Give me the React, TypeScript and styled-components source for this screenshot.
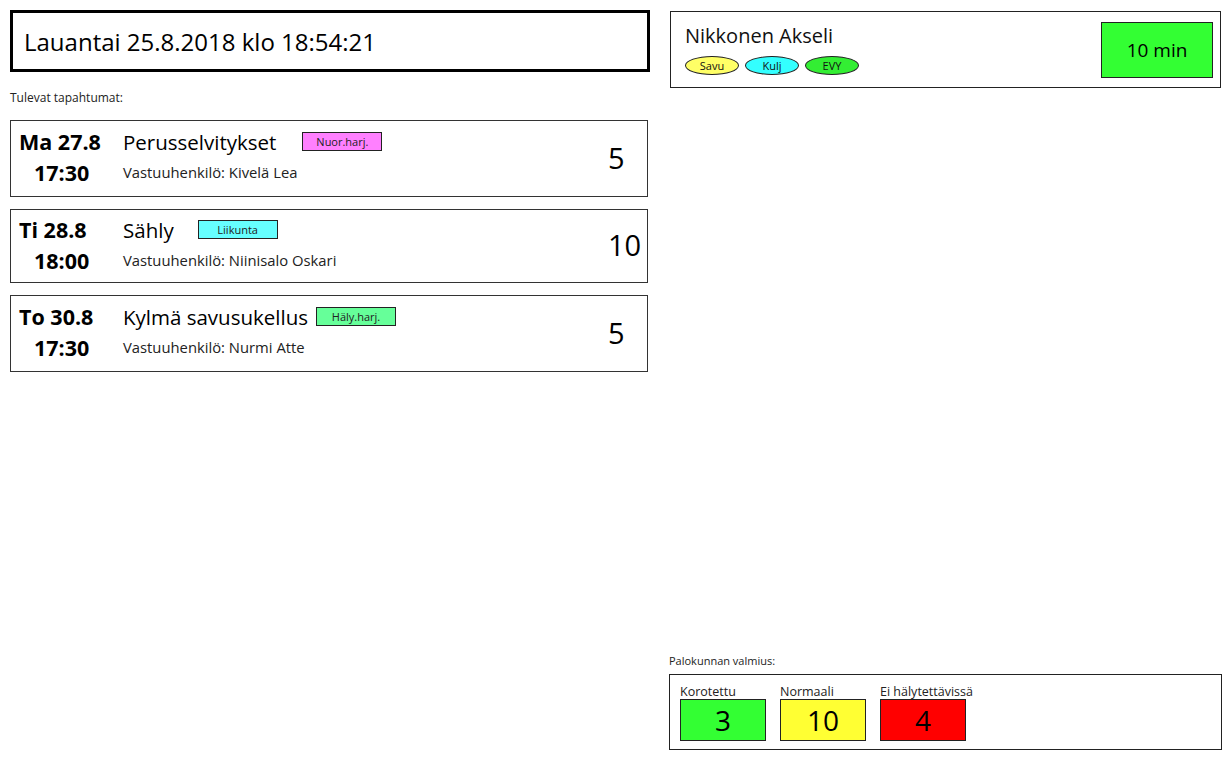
import React from "react";
import styled, { createGlobalStyle } from "styled-components";

const GlobalStyle = createGlobalStyle`
  html, body {
    margin: 0;
    padding: 0;
    background: #ffffff;
  }
  body {
    font-family: "Open Sans", "DejaVu Sans", sans-serif;
    color: #111111;
  }
  * {
    box-sizing: border-box;
  }
`;

type EventItem = {
  day: string;
  time: string;
  title: string;
  tag: string;
  tagColor: string;
  tagGap: number;
  person: string;
  count: string;
  height: number;
};

const events: EventItem[] = [
  {
    day: "Ma 27.8",
    time: "17:30",
    title: "Perusselvitykset",
    tag: "Nuor.harj.",
    tagColor: "#ff80ff",
    tagGap: 26,
    person: "Kivelä Lea",
    count: "5",
    height: 77,
  },
  {
    day: "Ti 28.8",
    time: "18:00",
    title: "Sähly",
    tag: "Liikunta",
    tagColor: "#66ffff",
    tagGap: 24,
    person: "Niinisalo Oskari",
    count: "10",
    height: 74,
  },
  {
    day: "To 30.8",
    time: "17:30",
    title: "Kylmä savusukellus",
    tag: "Häly.harj.",
    tagColor: "#66ff99",
    tagGap: 8,
    person: "Nurmi Atte",
    count: "5",
    height: 77,
  },
];

const skills = [
  { label: "Savu", color: "#ffff66" },
  { label: "Kulj", color: "#33ffff" },
  { label: "EVY", color: "#33ee33" },
];

const readiness = [
  { label: "Korotettu", value: "3", color: "#33ff33" },
  { label: "Normaali", value: "10", color: "#ffff33" },
  { label: "Ei hälytettävissä", value: "4", color: "#ff0000" },
];

const App = () => {
  return (
    <>
      <GlobalStyle />
      <Page>
        <LeftColumn>
          <Clock>Lauantai 25.8.2018 klo 18:54:21</Clock>
          <SectionLabel $top={19} $size={12}>
            Tulevat tapahtumat:
          </SectionLabel>
          <EventList>
            {events.map((ev) => (
              <EventCard key={ev.day} $height={ev.height}>
                <DateBlock>
                  <Day>{ev.day}</Day>
                  <Time>{ev.time}</Time>
                </DateBlock>
                <Info>
                  <TitleRow>
                    <Title>{ev.title}</Title>
                    <Tag $color={ev.tagColor} $gap={ev.tagGap}>
                      {ev.tag}
                    </Tag>
                  </TitleRow>
                  <Person>Vastuuhenkilö: {ev.person}</Person>
                </Info>
                <Count>{ev.count}</Count>
              </EventCard>
            ))}
          </EventList>
        </LeftColumn>

        <RightColumn>
          <PersonCard>
            <PersonInfo>
              <PersonName>Nikkonen Akseli</PersonName>
              <Pills>
                {skills.map((s) => (
                  <Pill key={s.label} $color={s.color}>
                    {s.label}
                  </Pill>
                ))}
              </Pills>
            </PersonInfo>
            <Eta>10 min</Eta>
          </PersonCard>

          <Readiness>
            <SectionLabel $top={0} $size={11}>
              Palokunnan valmius:
            </SectionLabel>
            <ReadinessBox>
              {readiness.map((r) => (
                <Level key={r.label}>
                  <LevelLabel>{r.label}</LevelLabel>
                  <LevelValue $color={r.color}>{r.value}</LevelValue>
                </Level>
              ))}
            </ReadinessBox>
          </Readiness>
        </RightColumn>
      </Page>
    </>
  );
};

export default App;

const Page = styled.div`
  display: grid;
  grid-template-columns: 640px 552px;
  column-gap: 19px;
  width: 1232px;
  height: 759px;
  padding: 10px 0 9px 10px;
`;

const LeftColumn = styled.div`
  display: flex;
  flex-direction: column;
`;

const Clock = styled.div`
  display: flex;
  align-items: center;
  height: 62px;
  padding-left: 11px;
  border: 3px solid #000000;
  font-size: 24px;
  color: #000000;
`;

const SectionLabel = styled.div<{ $top: number; $size: number }>`
  margin-top: ${(p) => p.$top}px;
  font-size: ${(p) => p.$size}px;
  line-height: 14px;
  color: #222222;
`;

const EventList = styled.div`
  display: flex;
  flex-direction: column;
  gap: 12px;
  width: 638px;
  margin-top: 15px;
`;

const EventCard = styled.div<{ $height: number }>`
  display: flex;
  align-items: stretch;
  height: ${(p) => p.$height}px;
  border: 1px solid #333333;
  padding: 0 0 0 8px;
`;

const DateBlock = styled.div`
  display: flex;
  flex-direction: column;
  justify-content: center;
  gap: 3px;
  width: 104px;
  margin-top: -2px;
  font-weight: 700;
  font-size: 21.5px;
  line-height: 28px;
  color: #000000;
`;

const Day = styled.div``;

const Time = styled.div`
  padding-left: 15px;
`;

const Info = styled.div`
  display: flex;
  flex-direction: column;
  justify-content: center;
  gap: 5px;
  flex: 1;
`;

const TitleRow = styled.div`
  display: flex;
  align-items: center;
  margin-top: -6px;
`;

const Title = styled.div`
  font-size: 20.5px;
  line-height: 28px;
  color: #000000;
`;

const Tag = styled.div<{ $color: string; $gap: number }>`
  display: flex;
  align-items: center;
  justify-content: center;
  width: 80px;
  height: 19px;
  margin-left: ${(p) => p.$gap}px;
  margin-top: -1px;
  background: ${(p) => p.$color};
  border: 1px solid #222222;
  font-size: 11px;
  color: #222222;
`;

const Person = styled.div`
  font-size: 14.8px;
  line-height: 22px;
  color: #222222;
`;

const Count = styled.div`
  display: flex;
  align-items: center;
  width: 39px;
  margin-top: -3px;
  font-size: 29px;
  color: #000000;
`;

const RightColumn = styled.div`
  display: flex;
  flex-direction: column;
  justify-content: space-between;
`;

const PersonCard = styled.div`
  display: flex;
  justify-content: space-between;
  width: 551px;
  height: 77px;
  margin: 1px 0 0 1px;
  padding: 9px 7px 10px 14px;
  border: 1px solid #222222;
`;

const PersonInfo = styled.div`
  display: flex;
  flex-direction: column;
  gap: 5px;
`;

const PersonName = styled.div`
  font-size: 20px;
  line-height: 30px;
  color: #111111;
`;

const Pills = styled.div`
  display: flex;
  gap: 6px;
`;

const Pill = styled.div<{ $color: string }>`
  display: flex;
  align-items: center;
  justify-content: center;
  width: 54px;
  height: 19px;
  border-radius: 50%;
  background: ${(p) => p.$color};
  border: 1px solid #222222;
  font-size: 11px;
  color: #111111;
`;

const Eta = styled.div`
  display: flex;
  align-items: center;
  justify-content: center;
  width: 112px;
  height: 56px;
  margin-top: 1px;
  background: #33ff33;
  border: 1px solid #222222;
  font-size: 19px;
  color: #000000;
`;

const Readiness = styled.div`
  display: flex;
  flex-direction: column;
  gap: 6px;
`;

const ReadinessBox = styled.div`
  display: flex;
  gap: 14px;
  width: 553px;
  height: 76px;
  padding: 10px 10px 8px;
  border: 1px solid #222222;
`;

const Level = styled.div`
  display: flex;
  flex-direction: column;
  width: 86px;
`;

const LevelLabel = styled.div`
  font-size: 12.5px;
  line-height: 14px;
  white-space: nowrap;
  color: #222222;
`;

const LevelValue = styled.div<{ $color: string }>`
  display: flex;
  align-items: center;
  justify-content: center;
  height: 43px;
  background: ${(p) => p.$color};
  border: 1px solid #222222;
  font-size: 28px;
  color: #000000;
`;
